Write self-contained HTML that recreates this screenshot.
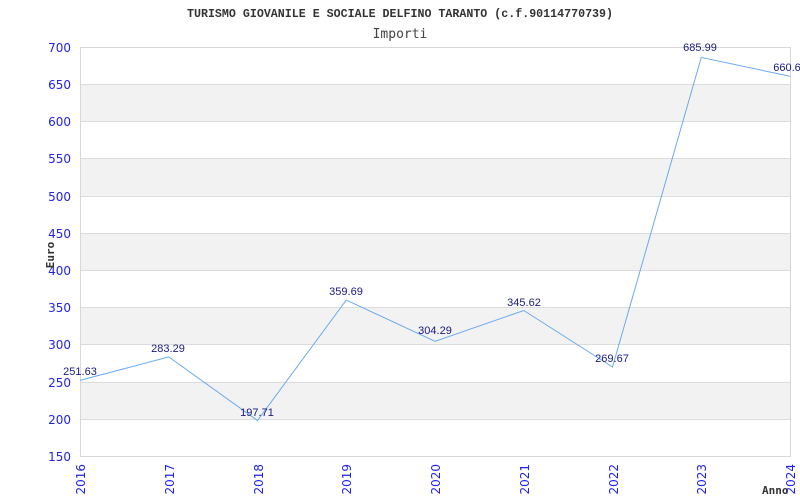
<!DOCTYPE html>
<html><head><meta charset="utf-8"><style>
html,body{margin:0;padding:0;background:#fff;}
svg{display:block;}
</style></head><body>
<svg width="800" height="500" xmlns="http://www.w3.org/2000/svg">
<rect width="800" height="500" fill="#fff"/>
<g fill="#f2f2f2">
<rect x="80" y="84.2" width="710" height="37.2"/>
<rect x="80" y="158.6" width="710" height="37.2"/>
<rect x="80" y="233" width="710" height="37.2"/>
<rect x="80" y="307.3" width="710" height="37.2"/>
<rect x="80" y="381.7" width="710" height="37.2"/>
</g>
<g stroke="#dcdcdc" stroke-width="1">
<line x1="80" y1="84.5" x2="790" y2="84.5"/>
<line x1="80" y1="121.5" x2="790" y2="121.5"/>
<line x1="80" y1="158.5" x2="790" y2="158.5"/>
<line x1="80" y1="196.5" x2="790" y2="196.5"/>
<line x1="80" y1="233.5" x2="790" y2="233.5"/>
<line x1="80" y1="270.5" x2="790" y2="270.5"/>
<line x1="80" y1="307.5" x2="790" y2="307.5"/>
<line x1="80" y1="344.5" x2="790" y2="344.5"/>
<line x1="80" y1="382.5" x2="790" y2="382.5"/>
<line x1="80" y1="419.5" x2="790" y2="419.5"/>
</g>
<rect x="80.5" y="47.5" width="710" height="409" fill="none" stroke="#d8d8d8"/>
<polyline fill="none" stroke="#6aaaf0" stroke-width="1" points="80,380.4 168.75,356.9 257.5,420.5 346.25,300.1 435,341.3 523.75,310.5 612.5,367 701.25,57.4 790,76.3"/>
<g font-family="Liberation Sans, sans-serif" font-size="11" fill="#1a1a80" text-anchor="middle">
<text x="80" y="375">251.63</text>
<text x="168" y="352">283.29</text>
<text x="257" y="416">197.71</text>
<text x="346" y="295">359.69</text>
<text x="435" y="334">304.29</text>
<text x="524" y="306">345.62</text>
<text x="612" y="362">269.67</text>
<text x="700" y="51">685.99</text>
<text x="787" y="71">660.6</text>
</g>
<g font-family="DejaVu Sans, sans-serif" font-size="12" fill="#2222ee" text-anchor="end">
<text x="71" y="52">700</text>
<text x="71" y="89">650</text>
<text x="71" y="126">600</text>
<text x="71" y="163">550</text>
<text x="71" y="201">500</text>
<text x="71" y="238">450</text>
<text x="71" y="275">400</text>
<text x="71" y="312">350</text>
<text x="71" y="349">300</text>
<text x="71" y="387">250</text>
<text x="71" y="424">200</text>
<text x="71" y="461">150</text>
</g>
<g font-family="DejaVu Sans, sans-serif" font-size="12" fill="#2222ee" text-anchor="end">
<text transform="translate(85,464) rotate(-90)">2016</text>
<text transform="translate(174,464) rotate(-90)">2017</text>
<text transform="translate(263,464) rotate(-90)">2018</text>
<text transform="translate(351,464) rotate(-90)">2019</text>
<text transform="translate(440,464) rotate(-90)">2020</text>
<text transform="translate(529,464) rotate(-90)">2021</text>
<text transform="translate(618,464) rotate(-90)">2022</text>
<text transform="translate(706,464) rotate(-90)">2023</text>
<text transform="translate(795,464) rotate(-90)">2024</text>
</g>
<text x="187" y="17" textLength="426" lengthAdjust="spacingAndGlyphs" font-family="Liberation Mono, monospace" font-weight="bold" font-size="11.5" fill="#333">TURISMO GIOVANILE E SOCIALE DELFINO TARANTO (c.f.90114770739)</text>
<text x="400" y="38" font-family="DejaVu Sans Mono, monospace" font-size="13" fill="#444" text-anchor="middle">Importi</text>
<text transform="translate(54,255) rotate(-90)" font-family="DejaVu Sans Mono, monospace" font-weight="bold" font-size="11" fill="#333" text-anchor="middle">Euro</text>
<text x="762" y="494" font-family="DejaVu Sans Mono, monospace" font-weight="bold" font-size="11" fill="#333">Anno</text>
</svg>
</body></html>
